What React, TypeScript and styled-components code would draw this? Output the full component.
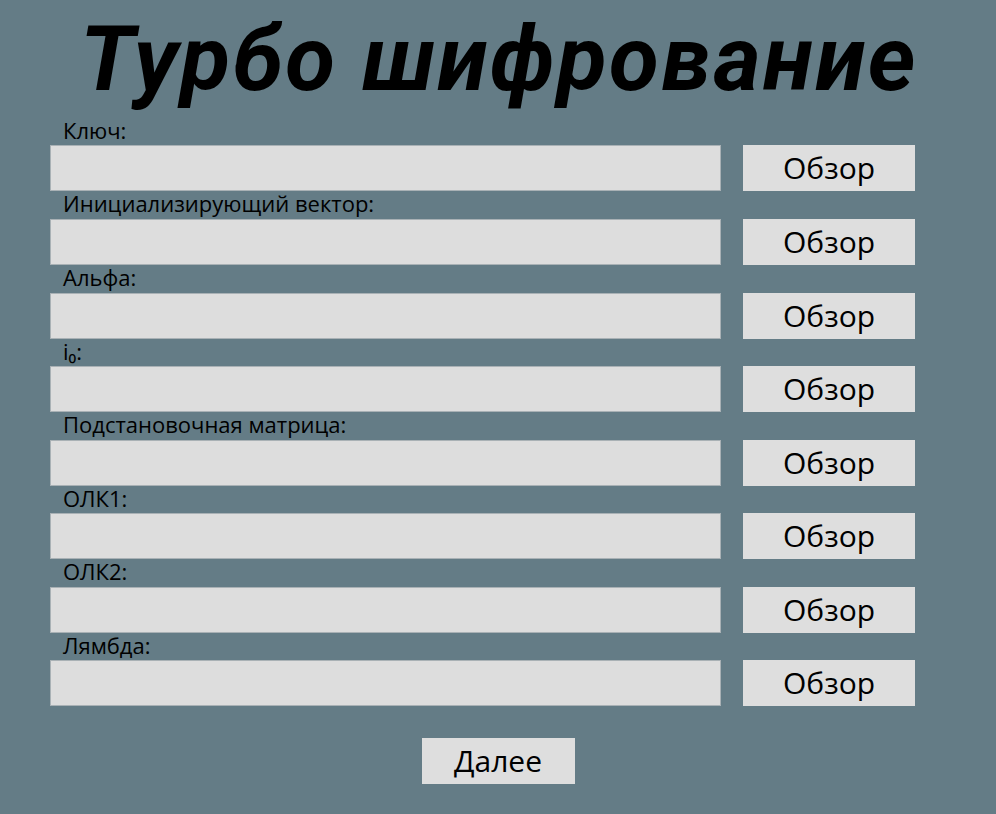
import React from "react";
import styled, { createGlobalStyle } from "styled-components";

const GlobalStyle = createGlobalStyle`
  html, body {
    margin: 0;
    padding: 0;
    background: #647c86;
  }
  body {
    font-family: "Open Sans", "Noto Sans", sans-serif;
    color: #000;
  }
`;

const Page = styled.div`
  width: 996px;
  height: 814px;
  background: #647c86;
  box-sizing: border-box;
  padding-top: 5.6px;
  display: flex;
  flex-direction: column;
  align-items: center;
  overflow: hidden;
`;

const Title = styled.h1`
  margin: 0 0 6.3px;
  padding: 0 14px 0 16px;
  font-family: Roboto, "Open Sans", sans-serif;
  font-weight: 700;
  font-style: italic;
  font-size: 91px;
  line-height: normal;
  text-align: center;
  letter-spacing: 2.4px;
  white-space: nowrap;
`;

const Form = styled.div`
  align-self: flex-start;
  margin-left: 50px;
  display: flex;
  flex-direction: column;
`;

const Field = styled.div`
  display: flex;
  flex-direction: column;
`;

const Label = styled.label`
  display: block;
  height: 27.57px;
  box-sizing: border-box;
  padding: 0 0 3.57px 13px;
  font-size: 22px;
  line-height: 24px;
  white-space: nowrap;
`;

const Row = styled.div`
  display: grid;
  grid-template-columns: 671px 172px;
  column-gap: 22px;
`;

const TextInput = styled.input`
  box-sizing: border-box;
  height: 46px;
  width: 100%;
  margin: 0;
  padding: 0 10px;
  background: #dddddd;
  border: 1px solid #a9b1b5;
  border-radius: 0;
  outline: none;
  font-family: "Open Sans", sans-serif;
  font-size: 20px;
`;

const Button = styled.button<{ $w?: number }>`
  box-sizing: border-box;
  height: 46px;
  width: ${(p) => (p.$w ? `${p.$w}px` : "100%")};
  margin: 0;
  padding: 0;
  background: #dedede;
  border: none;
  border-radius: 0;
  font-family: "Open Sans", sans-serif;
  font-size: 30px;
  line-height: 46px;
  color: #000;
  cursor: pointer;
`;

const Footer = styled.div`
  display: flex;
  justify-content: center;
  margin-top: 32px;
`;

const fields = [
  "Ключ:",
  "Инициализирующий вектор:",
  "Альфа:",
  "i₀:",
  "Подстановочная матрица:",
  "ОЛК1:",
  "ОЛК2:",
  "Лямбда:",
];

export default function App() {
  return (
    <>
      <GlobalStyle />
      <Page>
        <Title>Турбо шифрование</Title>
        <Form>
          {fields.map((label, i) => (
            <Field key={i}>
              <Label>{label}</Label>
              <Row>
                <TextInput type="text" />
                <Button type="button">Обзор</Button>
              </Row>
            </Field>
          ))}
        </Form>
        <Footer>
          <Button type="button" $w={153}>
            Далее
          </Button>
        </Footer>
      </Page>
    </>
  );
}
